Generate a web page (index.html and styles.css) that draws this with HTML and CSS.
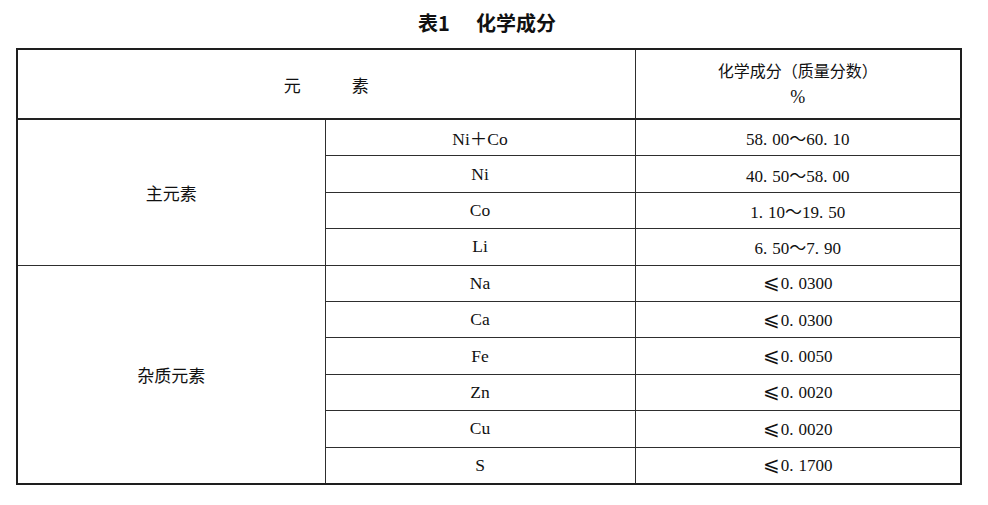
FILE: index.html
```html
<!DOCTYPE html>
<html lang="zh-CN">
<head>
<meta charset="utf-8">
<title>表1 化学成分</title>
<link rel="stylesheet" href="styles.css">
</head>
<body>
<div class="page">
  <h1 class="caption"><span class="cap-num">表1</span><span class="cap-text">化学成分</span></h1>
  <table class="comp">
    <colgroup>
      <col class="c1"><col class="c2"><col class="c3">
    </colgroup>
    <thead>
      <tr class="head">
        <th colspan="2" class="h-el">元　　　素</th>
        <th class="h-val"><span class="h-line">化学成分（质量分数）</span><span class="h-line pct">%</span></th>
      </tr>
    </thead>
    <tbody class="grp">
      <tr>
        <td rowspan="4" class="grp-name">主元素</td>
        <td class="el">Ni＋Co</td>
        <td class="val">58<span class="dot">.</span>00～60<span class="dot">.</span>10</td>
      </tr>
      <tr><td class="el">Ni</td><td class="val">40<span class="dot">.</span>50～58<span class="dot">.</span>00</td></tr>
      <tr><td class="el">Co</td><td class="val">1<span class="dot">.</span>10～19<span class="dot">.</span>50</td></tr>
      <tr><td class="el">Li</td><td class="val">6<span class="dot">.</span>50～7<span class="dot">.</span>90</td></tr>
    </tbody>
    <tbody class="grp">
      <tr>
        <td rowspan="6" class="grp-name">杂质元素</td>
        <td class="el">Na</td>
        <td class="val"><span class="le">⩽</span>0<span class="dot">.</span>0300</td>
      </tr>
      <tr><td class="el">Ca</td><td class="val"><span class="le">⩽</span>0<span class="dot">.</span>0300</td></tr>
      <tr><td class="el">Fe</td><td class="val"><span class="le">⩽</span>0<span class="dot">.</span>0050</td></tr>
      <tr><td class="el">Zn</td><td class="val"><span class="le">⩽</span>0<span class="dot">.</span>0020</td></tr>
      <tr><td class="el">Cu</td><td class="val"><span class="le">⩽</span>0<span class="dot">.</span>0020</td></tr>
      <tr><td class="el">S</td><td class="val"><span class="le">⩽</span>0<span class="dot">.</span>1700</td></tr>
    </tbody>
  </table>
</div>
</body>
</html>
```

FILE: styles.css
```css
html, body {
  margin: 0;
  padding: 0;
  background: #ffffff;
}

.page {
  width: 988px;
  height: 505px;
  padding-top: 12px;
  box-sizing: border-box;
  color: #111111;
  font-family: "Liberation Serif", "Noto Sans CJK SC", serif;
}

.caption {
  margin: 0 0 14px 0;
  height: 22px;
  line-height: 22px;
  font-family: "Noto Sans CJK SC", sans-serif;
  font-size: 20px;
  font-weight: 700;
  display: flex;
  justify-content: center;
  gap: 26px;
  padding-right: 14px;
}

.comp {
  margin-left: 16px;
  width: 944px;
  table-layout: fixed;
  border-collapse: collapse;
  border: 2px solid #1e1e1e;
}

.c1 { width: 308px; }
.c2 { width: 310px; }
.c3 { width: 326px; }

.comp th,
.comp td {
  padding: 0;
  text-align: center;
  vertical-align: middle;
  border: 1px solid #2e2e2e;
  font-weight: 400;
}

.head th {
  height: 68px;
  border-bottom: 2px solid #222222;
}

.h-el {
  font-family: "Noto Sans CJK SC", sans-serif;
  font-size: 17px;
}

.h-val {
  font-family: "Noto Sans CJK SC", sans-serif;
  font-size: 16px;
}

.h-line {
  display: block;
  line-height: 27px;
}

.h-line.pct {
  font-family: "Liberation Serif", serif;
  font-size: 18px;
}

.comp tbody td {
  height: 35.4px;
}

.grp + .grp tr:first-child td {
  border-top: 1px solid #222222;
}

.grp-name {
  font-family: "Noto Sans CJK SC", sans-serif;
  font-size: 17px;
}

.el {
  font-size: 17.5px;
}

.val {
  font-size: 17px;
}

.dot {
  margin-right: 5px;
}

.le {
  font-family: "DejaVu Sans", "Noto Sans CJK SC", sans-serif;
  font-size: 20px;
  line-height: 1;
  margin-right: 1px;
}
```
